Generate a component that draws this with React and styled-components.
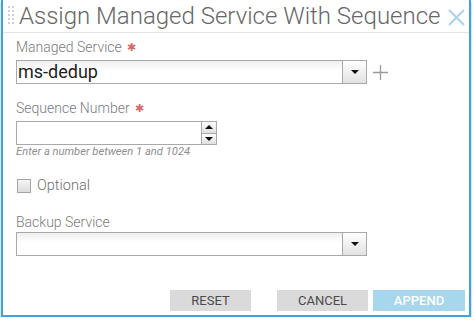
import React from "react";
import styled, { createGlobalStyle } from "styled-components";

const Global = createGlobalStyle`
  html, body { margin: 0; padding: 0; background: #fff; overflow: hidden; }
  body { font-family: Roboto, "Liberation Sans", Arial, sans-serif; }
  * { box-sizing: border-box; }
`;

const Dialog = styled.div`
  width: 470px;
  height: 317px;
  margin-left: 1px;
  background: #fff;
  border: 2px solid #3ba4da;
  border-top: none;
  box-shadow: 0 2px 2px rgba(0, 0, 0, 0.35);
  display: flex;
  flex-direction: column;
`;

const Header = styled.div`
  height: 33px;
  border-bottom: 1px solid #e3e3e3;
  display: flex;
  align-items: center;
  padding-left: 5px;
  padding-right: 4px;
`;

const Handle = styled.div`
  display: grid;
  grid-template-columns: 2px 2px;
  grid-auto-rows: 2px;
  gap: 2px 2px;
  margin-right: 5px;
  margin-top: -2px;
  span { background: #d2d2d2; }
`;

const Title = styled.h1`
  margin: 0;
  font-size: 24px;
  font-weight: 300;
  color: #676767;
  line-height: 28px;
  white-space: nowrap;
  flex: 1;
  margin-top: -1px;
`;

const Close = styled.button`
  border: none;
  background: none;
  padding: 0;
  width: 18px;
  height: 18px;
  margin-right: 0;
  margin-top: 2px;
  display: flex;
  align-items: center;
  justify-content: center;
`;

const Body = styled.div`
  padding: 0 0 0 13px;
  display: flex;
  flex-direction: column;
  flex: 1;
`;

const Label = styled.div`
  font-size: 14px;
  font-weight: 300;
  line-height: 16px;
  color: #7a7a7a;
  margin-top: ${(p) => p.$top}px;
  margin-bottom: ${(p) => p.$gap ?? 3}px;
`;

const Star = styled.span`
  color: #d46a6a;
  margin-left: 5px;
  font-size: 11px;
  position: relative;
  top: -1px;
`;

const Row = styled.div`
  display: flex;
  align-items: center;
`;

const SelectBox = styled.div`
  width: ${(p) => p.$w}px;
  height: 24px;
  border: 1px solid #a9a9a9;
  background: linear-gradient(#efefef, #fff 45%);
  display: flex;
  align-items: stretch;
`;

const SelectValue = styled.div`
  flex: 1;
  font-size: 18px;
  line-height: 22px;
  color: #1e1e1e;
  padding-left: 1px;
`;

const DropBtn = styled.div`
  width: 24px;
  border-left: 1px solid #a9a9a9;
  background: linear-gradient(#ffffff, #e2e2e2);
  display: flex;
  align-items: center;
  justify-content: center;
`;

const Caret = styled.span`
  width: 0;
  height: 0;
  border-left: 4px solid transparent;
  border-right: 4px solid transparent;
  border-${(p) => (p.$up ? "bottom" : "top")}: 4px solid #111;
`;

const Plus = styled.div`
  margin-left: 5px;
  width: 17px;
  height: 17px;
  display: flex;
`;

const NumberBox = styled.div`
  width: 201px;
  height: 24px;
  border: 1px solid #a9a9a9;
  display: flex;
  background: #fff;
`;

const NumField = styled.div`
  flex: 1;
`;

const Spinner = styled.div`
  width: 15px;
  display: flex;
  flex-direction: column;
  border-left: 1px solid #a9a9a9;
`;

const SpinBtn = styled.div`
  flex: 1;
  display: flex;
  align-items: center;
  justify-content: center;
  background: linear-gradient(#fdfdfd, #e0e0e0);
  & + & { border-top: 1px solid #a9a9a9; }
`;

const Help = styled.div`
  font-size: 11.2px;
  line-height: 13px;
  font-style: italic;
  color: #8e8e8e;
`;

const CheckRow = styled.label`
  display: flex;
  align-items: center;
  margin-top: 20px;
  font-size: 14.5px;
  font-weight: 300;
  line-height: 16px;
  color: #6e6e6e;
`;

const Box = styled.span`
  width: 14px;
  height: 14px;
  border: 1px solid #a5a5a5;
  background: linear-gradient(#f4f4f4, #dcdcdc);
  margin-left: 1px;
  margin-right: 6px;
`;

const Buttons = styled.div`
  display: flex;
  justify-content: flex-end;
  margin-top: 34px;
  padding-right: 4px;
`;

const Btn = styled.button`
  width: ${(p) => p.$w}px;
  height: 21px;
  margin-left: ${(p) => p.$ml}px;
  border: none;
  padding: 0;
  font-family: Roboto, "Liberation Sans", Arial, sans-serif;
  font-size: 13px;
  text-transform: uppercase;
  background: ${(p) => (p.$primary ? "#a6d7ed" : "#dadada")};
  color: ${(p) => (p.$primary ? "#ffffff" : "#4a4a4a")};
  font-weight: ${(p) => (p.$primary ? 500 : 400)};
`;

function DragHandle() {
  return (
    <Handle>
      {Array.from({ length: 10 }).map((_, i) => (
        <span key={i} />
      ))}
    </Handle>
  );
}

function Select({ value }) {
  return (
    <SelectBox $w={351}>
      <SelectValue>{value}</SelectValue>
      <DropBtn>
        <Caret />
      </DropBtn>
    </SelectBox>
  );
}

export default function App() {
  return (
    <>
      <Global />
      <Dialog>
        <Header>
          <DragHandle />
          <Title>Assign Managed Service With Sequence</Title>
          <Close aria-label="close">
            <svg width="17" height="17" viewBox="0 0 17 17">
              <path d="M1 1 L16 16 M16 1 L1 16" stroke="#a9d3ea" strokeWidth="2" fill="none" />
            </svg>
          </Close>
        </Header>
        <Body>
          <Label $top={6}>
            Managed Service<Star>✱</Star>
          </Label>
          <Row>
            <Select value="ms-dedup" />
            <Plus>
              <svg width="17" height="17" viewBox="0 0 17 17">
                <path d="M8.5 1 V16 M1 8.5 H16" stroke="#9a9a9a" strokeWidth="1.3" fill="none" />
              </svg>
            </Plus>
          </Row>
          <Label $top={16}>
            Sequence Number<Star>✱</Star>
          </Label>
          <NumberBox>
            <NumField />
            <Spinner>
              <SpinBtn>
                <Caret $up />
              </SpinBtn>
              <SpinBtn>
                <Caret />
              </SpinBtn>
            </Spinner>
          </NumberBox>
          <Help>Enter a number between 1 and 1024</Help>
          <CheckRow>
            <Box />
            Optional
          </CheckRow>
          <Label $top={20} $gap={2}>
            Backup Service
          </Label>
          <Select value="" />
          <Buttons>
            <Btn $w={81}>Reset</Btn>
            <Btn $w={91} $ml={26}>Cancel</Btn>
            <Btn $w={92} $ml={5} $primary>Append</Btn>
          </Buttons>
        </Body>
      </Dialog>
    </>
  );
}
